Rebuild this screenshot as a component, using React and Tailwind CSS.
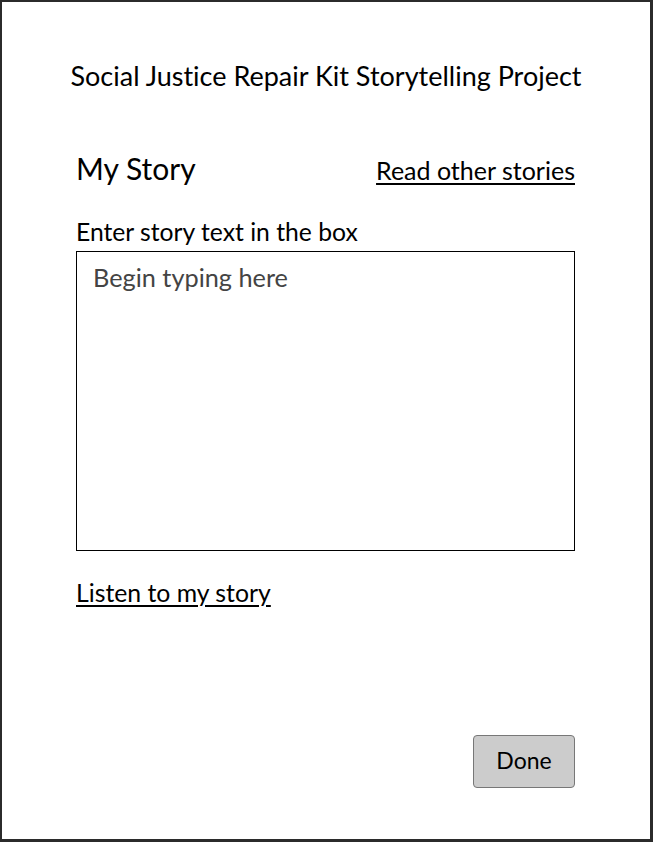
import React from "react";

const FONT = { fontFamily: "Lato, 'Open Sans', sans-serif", fontVariantLigatures: "none" };

export default function App() {
  return (
    <div
      style={FONT}
      className="w-[653px] h-[842px] bg-white text-black flex flex-col border-t-2 border-l-2 border-r-[3px] border-b-[3px] border-[#2b2b2b]"
    >
      {/* Header */}
      <h1 className="mt-[58px] text-center text-[27px] leading-[32px] font-normal">
        Social Justice Repair Kit Storytelling Project
      </h1>

      <div className="pl-[74px] pr-[75px] flex flex-col flex-1">
        <div className="mt-[60px] flex items-center justify-between h-[36px]">
          <h2 className="-mt-[4px] text-[30px] leading-[36px] font-normal">My Story</h2>
          <a href="#" className="text-[25px] leading-[30px] underline underline-offset-[3px]">
            Read other stories
          </a>
        </div>

        <label className="mt-[29px] text-[24.7px] leading-[30px]">Enter story text in the box</label>
        <textarea
          style={FONT}
          placeholder="Begin typing here"
          className="mt-[4px] h-[300px] w-full resize-none border border-black pl-[16px] pt-[10px] text-[25.3px] leading-[30px] outline-none placeholder:text-[#444]"
        />

        <a href="#" className="mt-[27px] self-start text-[24.8px] leading-[30px] underline underline-offset-[3px]">
          Listen to my story
        </a>

        <div className="flex-1" />
        <div className="flex justify-end mb-[51px]">
          <button className="w-[102px] h-[53px] rounded-[4px] bg-[#cccccc] border border-[#777] text-[23px] pb-[2px]">
            Done
          </button>
        </div>
      </div>
    </div>
  );
}
